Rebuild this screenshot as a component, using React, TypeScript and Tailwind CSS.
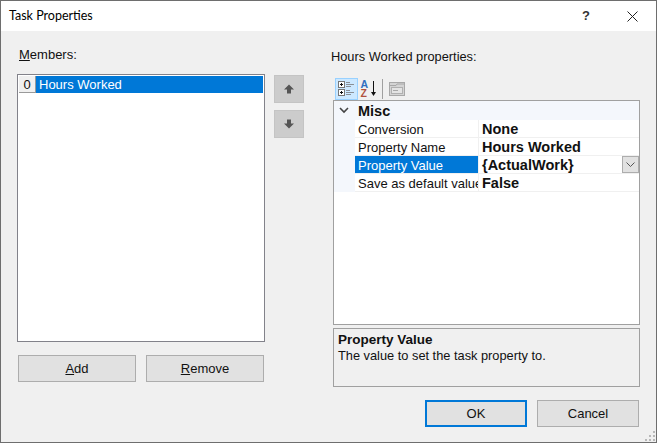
const FONT = 'font-["Liberation_Sans",Arial,sans-serif]'

function ArrowButton({ down }: { down?: boolean }) {
  return (
    <div className="w-[30px] h-[28px] bg-[#cccccc] border border-[#c4c4c4] flex items-center justify-center">
      <svg width="10" height="10" viewBox="0 0 10 10" className={down ? 'rotate-180' : ''}>
        <path d="M5 0.5 L10 5.5 H7 V9.5 H3 V5.5 H0 Z" fill="#555555" />
      </svg>
    </div>
  )
}

function FlatButton({ children, className = '' }: { children: React.ReactNode; className?: string }) {
  return (
    <div className={`h-[27px] bg-[#e1e1e1] flex items-center justify-center text-[13px] text-[#111] ${className}`}>
      {children}
    </div>
  )
}

function CategorizedIcon() {
  return (
    <svg width="17" height="17" viewBox="0 0 17 17">
      <rect x="0.5" y="1.5" width="6" height="6" fill="#fff" stroke="#777" />
      <path d="M2 4.5 H5 M3.5 3 V6" stroke="#111" />
      <rect x="0.5" y="9.5" width="6" height="6" fill="#fff" stroke="#777" />
      <path d="M2 12.5 H5 M3.5 11 V14" stroke="#111" />
      <path d="M8 2.5 H12 M8 4.5 H16 M8 6.5 H13 M8 10.5 H12 M8 12.5 H16 M8 14.5 H13" stroke="#8a8f96" />
    </svg>
  )
}

function SortIcon() {
  return (
    <svg width="19" height="19" viewBox="0 0 19 19">
      <text x="0.5" y="9" fontSize="10.5" fontWeight="700" fontFamily="Liberation Sans" fill="#2f6fc0">A</text>
      <text x="0.5" y="18" fontSize="10.5" fontWeight="700" fontFamily="Liberation Sans" fill="#b0503c">Z</text>
      <path d="M13.5 2 V15" stroke="#111" strokeWidth="1" />
      <path d="M11 13 L13.5 17 L16 13 Z" fill="#111" />
    </svg>
  )
}

function PagesIcon() {
  return (
    <svg width="16" height="16" viewBox="0 0 16 16">
      <rect x="0.5" y="1.5" width="15" height="13" fill="#d4d4d4" stroke="#a8a8a8" />
      <path d="M0.5 4.5 H7 L8 3 H15.5" stroke="#a8a8a8" fill="none" />
      <rect x="2.5" y="6.5" width="11" height="6" fill="#e4e4e4" stroke="#b0b0b0" />
      <path d="M4 9.5 H9" stroke="#a8a8a8" />
    </svg>
  )
}

const ROWS = [
  { name: 'Conversion', value: 'None' },
  { name: 'Property Name', value: 'Hours Worked' },
  { name: 'Property Value', value: '{ActualWork}', selected: true },
  { name: 'Save as default value', value: 'False' },
]

export default function App() {
  return (
    <div className={`${FONT} relative w-[657px] h-[443px] bg-[#f0f0f0] border border-[#6e6e6e] flex flex-col overflow-hidden text-[13px] text-[#111]`}>
      {/* Title bar */}
      <div className="h-[30px] bg-white flex items-center shrink-0">
        <span className="ml-[8px] flex-1 text-[12.5px] font-['Lato',sans-serif] text-black">Task Properties</span>
        <span className="w-[46px] text-center text-[13px] font-bold text-[#333]">?</span>
        <div className="w-[46px] flex justify-center mr-[1px]">
          <svg width="11" height="11" viewBox="0 0 11 11">
            <path d="M0.5 0.5 L10.5 10.5 M10.5 0.5 L0.5 10.5" stroke="#222" strokeWidth="1" />
          </svg>
        </div>
      </div>

      <div className="flex flex-1 min-h-0">
        {/* Members column */}
        <div className="w-[248px] ml-[16px] shrink-0 flex flex-col">
          <div className="h-[43px] pt-[14px] pl-[2px] leading-[20px]"><u>M</u>embers:</div>
          <div className="h-[268px] bg-white border border-[#82828a] p-[1px]">
            <div className="h-[17px] flex">
              <div className="w-[17px] bg-[#f0f0f0] border-r border-b border-[#9a9a9a] flex items-center justify-center leading-none">0</div>
              <div className="flex-1 bg-[#0078d7] text-white pl-[3px] leading-[17px]">Hours Worked</div>
            </div>
          </div>
          <div className="mt-[13px] flex gap-[10px] pl-[1px]">
            <FlatButton className="w-[118px] border border-[#adadad]"><span><u>A</u>dd</span></FlatButton>
            <FlatButton className="w-[118px] border border-[#adadad]"><span><u>R</u>emove</span></FlatButton>
          </div>
        </div>

        {/* Reorder buttons */}
        <div className="ml-[9px] w-[30px] shrink-0 pt-[44px] flex flex-col gap-[7px]">
          <ArrowButton />
          <ArrowButton down />
        </div>

        {/* Property grid column */}
        <div className="ml-[29px] w-[307px] shrink-0 flex flex-col">
          <div className="h-[46px] pt-[16px] -ml-[2px] leading-[20px] text-[12.8px]">Hours Worked properties:</div>
          <div className="h-[23px] flex items-center pl-[2px]">
            <div className="w-[23px] h-[22px] bg-[#cce8ff] border border-[#99d1ff] flex items-center justify-center">
              <CategorizedIcon />
            </div>
            <div className="w-[22px] flex justify-center"><SortIcon /></div>
            <div className="w-[1px] h-[20px] bg-[#a0a0a0] ml-[2px]" />
            <div className="ml-[6px]"><PagesIcon /></div>
          </div>
          <div className="h-[225px] bg-white border border-[#a0a0a0] flex flex-col">
            <div className="h-[19px] bg-[#f4f7fc] flex items-center shrink-0">
              <svg width="24" height="19" viewBox="0 0 24 19" className="shrink-0">
                <path d="M6 7 L10 11 L14 7" stroke="#444" strokeWidth="1.6" fill="none" />
              </svg>
              <span className="font-bold text-[14.5px] pt-[2px]">Misc</span>
            </div>
            {ROWS.map((r) => (
              <div key={r.name} className="h-[18px] flex shrink-0">
                <div className="w-[21px] bg-[#f4f7fc] shrink-0" />
                <div className={`w-[124px] shrink-0 overflow-hidden whitespace-nowrap pl-[3px] leading-[19px] border-r border-b ${r.selected ? 'bg-[#0078d7] text-white border-[#f0f0f0]' : 'border-[#f0f0f0]'}`}>
                  {r.name}
                </div>
                <div className="flex-1 relative font-bold text-[14.5px] pl-[3px] leading-[19px] border-b border-[#f0f0f0]">
                  {r.value}
                  {r.selected && (
                    <div className="absolute right-0 top-0 w-[17px] h-[17px] bg-[#e1e1e1] border border-[#adadad] flex items-center justify-center">
                      <svg width="9" height="6" viewBox="0 0 9 6">
                        <path d="M0.5 0.5 L4.5 4.5 L8.5 0.5" stroke="#555" fill="none" />
                      </svg>
                    </div>
                  )}
                </div>
              </div>
            ))}
          </div>
          <div className="mt-[3px] h-[59px] border border-[#a0a0a0] px-[4px] pt-[3px] leading-[16px] text-[12.8px]">
            <div className="font-bold text-[13.5px]">Property Value</div>
            <div>The value to set the task property to.</div>
          </div>
          <div className="mt-[13px] flex gap-[10px] pl-[92px]">
            <FlatButton className="w-[102px] border-2 border-[#0078d7]">OK</FlatButton>
            <FlatButton className="w-[102px] border border-[#adadad]">Cancel</FlatButton>
          </div>
        </div>
      </div>

      {/* Resize grip */}
      <svg width="12" height="12" viewBox="0 0 12 12" className="absolute right-0 bottom-0">
        <path d="M9 1h2v2h-2z M5 5h2v2h-2z M9 5h2v2h-2z M1 9h2v2h-2z M5 9h2v2h-2z M9 9h2v2h-2z" fill="#b8b8b8" />
      </svg>
    </div>
  )
}
